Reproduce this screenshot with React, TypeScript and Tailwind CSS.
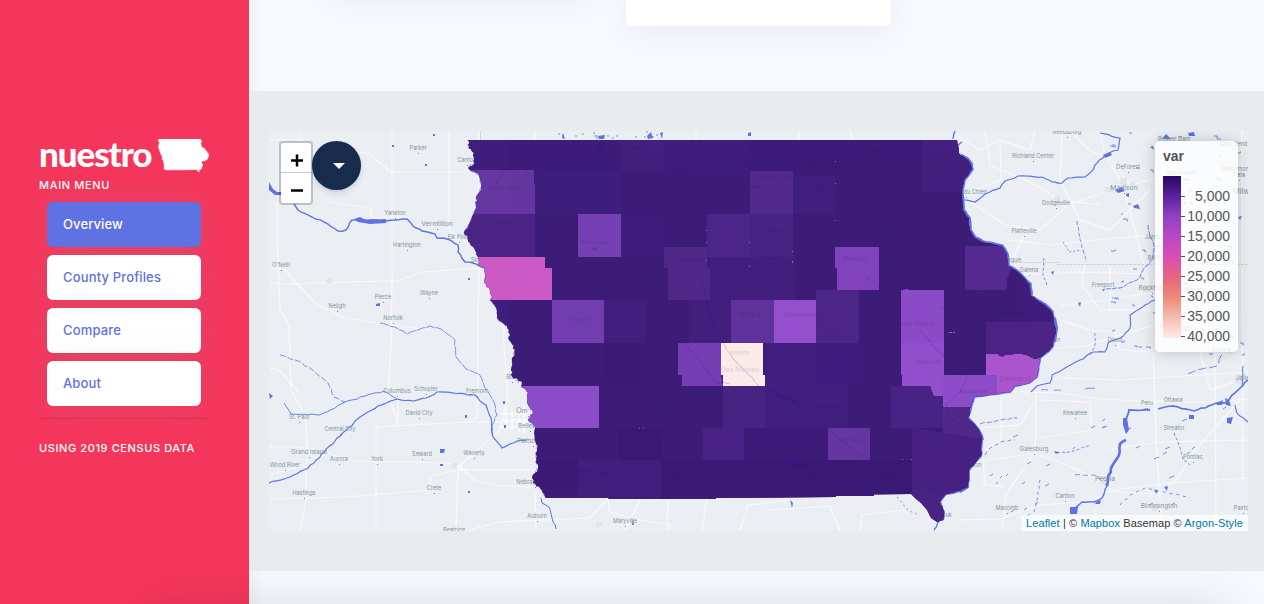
import React from 'react';

type Pt = [number, number];

const rand = (seed: number) => {
  let s = seed;
  return () => {
    s = (s * 16807) % 2147483647;
    return s / 2147483647;
  };
};

/* Subdivides a polyline and nudges the new points so that it reads as a natural bank. */
const rough = (pts: Pt[], amp: number, step: number, seed = 7): string => {
  const r = rand(seed);
  const out: string[] = [];
  for (let i = 0; i < pts.length - 1; i++) {
    const [x1, y1] = pts[i];
    const [x2, y2] = pts[i + 1];
    const n = Math.max(1, Math.round(Math.hypot(x2 - x1, y2 - y1) / step));
    for (let k = 0; k < n; k++) {
      const t = k / n;
      const j = k === 0 ? 0 : amp;
      out.push(`${(x1 + (x2 - x1) * t + (r() - 0.5) * 2 * j).toFixed(1)},${(y1 + (y2 - y1) * t + (r() - 0.5) * 2 * j).toFixed(1)}`);
    }
  }
  const last = pts[pts.length - 1];
  out.push(`${last[0]},${last[1]}`);
  return out.join(' ');
};

const parse = (s: string): Pt[] => s.split(' ').map((p) => p.split(',').map(Number) as Pt);

const west = parse('546,498 542,490 533,483 533,475 538,468 536,458 537,449 535,440 534,425 528,420 533,410 527,403 528,392 520,386 519,382 512,376 512,362 515,350 509,340 509,330 505,325 497,318 496,308 490,300 492,297 490,290 484,282 486,267 479,266 478,257 475,250 470,243 464,233 470,222 472,217 475,210 476,197 481,187 479,175 471,171 468,168 474,164 474,153 469,149 468,140');
const east = parse('957,140 960,155 968,160 972,169 964,180 962,190 963,210 969,218 970,230 975,238 983,242 1002,246 1007,254 1008,266 1018,272 1030,284 1031,296 1045,305 1052,312 1054,322 1056,330 1053,346 1049,351 1040,358 1037,377 1029,383 1015,386 1010,392 997,394 974,397 972,404 968,418 975,425 979,430 982,438 981,456 969,470 968,487 960,491 946,494 940,502 944,512 943,520');
const south = '937,522 931,518 927,510 921,503 916,499 911,494 874,494.5 874,496 836,496 836,497 790,497.5 716,498 716,499 609,499 608,498';
const outline = `${rough(west, 1.3, 2.5)} ${rough(east, 0.6, 3, 31)} ${south}`;

const counties: [string, string][] = [
  ['462,140 621,140 621,170 462,170', '#3f1e7b'],
  ['621,140 664,140 664,171 621,171', '#44217f'],
  ['664,140 750,140 750,171 664,171', '#3f1e7c'],
  ['750,140 922,140 922,171 750,171', '#3d1c79'],
  ['922,140 980,140 980,192 922,192', '#44217f'],
  ['462,170 534,170 534,184 535,184 535,214 462,214', '#6737a1'],
  ['535,171 621,171 621,214 535,214', '#401f7e'],
  ['793,176 835,176 835,214 793,214', '#41207f'],
  ['750,171 793,171 793,214 750,214', '#542c8d'],
  ['460,214 535,214 535,257 460,257', '#4b2585'],
  ['578,214 621,214 621,257 578,257', '#7641b3'],
  ['621,214 664,214 664,257 621,257', '#401e7c'],
  ['707,214 750,214 750,257 707,257', '#4d2788'],
  ['750,214 793,214 793,257 750,257', '#492484'],
  ['470,257 545,257 545,268 552,268 552,300 470,300', '#cb5ac5'],
  ['664,247 707,247 707,268 710,268 710,300 668,300 668,268 664,268', '#502989'],
  ['710,257 795,257 795,300 710,300', '#43207f'],
  ['835,247 879,247 879,290 837,290 837,268 835,268', '#8045bc'],
  ['965,246 1003,246 1012,268 1007,279 1007,290 965,290', '#552c91'],
  ['552,300 605,300 605,327 604,327 604,343 552,343', '#7340b0'],
  ['604,300 646,300 646,343 604,343', '#42207e'],
  ['689,300 731,300 731,343 689,343', '#43207f'],
  ['731,300 774,300 774,343 731,343', '#62349b'],
  ['774,300 816,300 816,343 774,343', '#9650cc'],
  ['816,290 859,290 859,343 816,343', '#4e2888'],
  ['901,290 908,289 908,290 944,290 944,343 901,343', '#8c4bc7'],
  ['986,322 1060,322 1060,365 986,355', '#4b2485'],
  ['604,343 640,343 640,386 610,386 604,375', '#3d1b77'],
  ['678,343 721,343 721,375 723,387 682,387 682,375 678,375', '#7540b2'],
  ['721,343 763,343 763,375 765,375 765,389 762,387 760,388 758,386 723,386 723,375 721,375', '#fbeae8'],
  ['765,343 816,343 816,386 765,386', '#42207f'],
  ['816,343 859,343 859,386 816,386', '#401e7e'],
  ['901,343 944,343 944,375 943,396 934,396 930,386 902,386 902,375 901,375', '#944fcb'],
  ['943,375 997,375 997,394 990,407 943,407', '#8d4bc7'],
  ['986,354 997,354 1002,357 1006,355 1020,354 1026,355 1034,359 1042,358 1042,400 997,400 997,375 986,375', '#ab55ce'],
  ['515,386 599,386 599,428 520,428', '#8c4ec8'],
  ['640,386 723,386 723,428 640,428', '#3e1d79'],
  ['723,386 765,386 765,428 723,428', '#492483'],
  ['765,386 848,386 848,428 765,428', '#41207e'],
  ['891,386 930,386 934,396 943,396 943,428 891,428', '#4a2486'],
  ['943,407 975,407 985,439 943,439', '#502989'],
  ['703,428 744,428 744,460 703,460', '#4a2485'],
  ['619,428 661,428 661,460 619,460', '#3b1a75'],
  ['744,428 828,428 828,460 744,460', '#3e1b78'],
  ['828,428 870,428 870,460 828,460', '#6737a2'],
  ['912,428 985,439 985,524 912,524', '#492384'],
  ['530,460 578,460 578,499 530,499', '#3d1b77'],
  ['578,460 661,460 661,499 578,499', '#41207d'],
  ['661,460 912,460 912,499 661,499', '#3c1a77'],
];

const roads = [
  '269,283 290,284 340,282 395,281 423,272 479,268', '269,267 285,270 298,285 315,303 345,318 390,325 430,330', '277,203 277,238 280,310 289,325 291,390 305,416 308,450 306,470 306,500 300,531',
  '299,131 303,153 368,153 391,172 465,172', '392,131 392,280 391,345 388,395 397,420 397,425', '449,131 449,228 460,245', '479,131 479,270 478,320 478,375 477,418 470,420', '329,202 371,208 372,218 410,217',
  '269,499 345,497 430,490 430,476 460,470 540,470', '269,447 300,447 320,450 350,461 450,463 460,467', '376,531 376,427 465,422 540,422', '456,531 458,467 500,430 508,395 504,345 503,250', '460,467 475,481 500,486 540,487', '535,490 536,531', '465,531 500,522 590,518 608,499', '608,499 610,512 635,519 670,525 670,531', '667,531 668,499', '707,499 702,531', '740,531 748,505 790,500', '640,499 625,531', '269,475 305,465', '398,395 398,426', '299,393 279,370 269,368',
  '956,135 980,150 1000,140 1030,150 1035,131', '985,131 990,165 1030,182 1060,200 1100,205', '1062,131 1060,180 1080,220 1110,230 1150,190', '1000,141 1001,180 960,195 1005,225 1040,230 1068,205 1120,187', '1025,235 1012,260 1008,280', '1100,131 1105,155 1123,185 1135,230 1145,270 1152,300', '1070,131 1089,150 1112,160 1130,185 1170,175', '1008,240 1050,245 1095,240 1155,235', '1020,275 1080,272 1145,274', '1085,264 1082,285 1100,310 1150,310', '1060,306 1105,300 1150,293', '1060,320 1090,330 1115,332 1120,350 1150,352', '1110,264 1110,310', '1055,348 1085,346 1120,335 1155,325',
  '1036,393 1036,440 1034,454 1060,462 1100,480 1112,490', '1020,392 1060,393 1100,399 1140,401 1200,402 1248,399', '986,460 1034,454', '1001,398 1001,440 985,450', '1038,400 1090,402 1092,430 1038,438', '1034,454 1006,494 1002,531', '1153,352 1155,400 1156,440 1160,500 1162,531', '1103,491 1160,494 1180,475 1195,450 1240,400', '1104,450 1160,442 1248,440', '1112,490 1170,483 1248,478', '1036,400 1020,425 980,428', '1100,495 1090,531', '1200,352 1210,390 1240,380', '1060,378 1120,380 1248,372', '1242,131 1243,480', '1215,352 1216,531', '960,520 1000,519 1040,505 1100,500', '860,531 862,515 905,510', '770,510 830,506 840,531', '984,460 984,485 1005,487', '269,140 300,139', '535,131 535,140', '696,131 696,140', '799,131 799,140', '850,131 853,140',
];

const rivers: [string, number, string?][] = [
  ['294,204 298,210 312,217 328,224 338,231 346,230 352,220 360,220 386,221 395,220 407,219 413,226 422,231 435,234 437,238 447,239 458,245 458,252 465,262 473,263 479,266 487,268 485,280', 1.4],
  ['380,323 395,327 407,334 420,329 430,326 441,329 455,340 456,357 466,369 479,374 485,388 494,402 497,415 492,425 493,435', 0.8, '9 1'],
  ['280,355 298,361 315,372 328,383 334,397 345,402', 0.8, '6 2'],
  ['284,403 291,414 320,415 345,402 365,396 384,391 397,399', 0.9],
  ['269,483 290,477 308,468 335,441 360,417 378,406 397,399 414,401 426,398 437,392 475,395 486,405 491,418 493,437 502,448 517,441 527,440', 1.2],
  ['541,498 542,503 549,507 552,518 556,529', 1],
  ['964,200 975,202 985,194 1000,188 1005,181 1018,176 1042,177 1052,182 1062,183 1068,178 1085,177 1093,170 1095,165 1105,155 1118,150 1120,138 1100,133', 1.2],
  ['1077,221 1080,240 1083,250 1086,262', 0.8, '4 2'],
  ['1044,258 1043,275 1047,286', 0.8, '3 2'],
  ['1063,242 1069,252 1080,250', 0.8, '2 2'], ['1148,225 1149,232 1154,245 1153,258 1143,270 1137,280 1120,288 1102,290', 0.9, '5 1'],
  ['1155,300 1145,305 1130,315 1130,328 1120,338 1108,343 1105,352 1093,352 1080,360 1065,368 1052,375 1050,383 1037,386 1031,392', 1.1],
  ['1248,380 1240,388 1232,395 1227,403 1216,403 1194,411 1173,406 1158,409', 1.6],
  ['1150,410 1129,410 1126,420', 1.8], ['1235,405 1237,413 1248,422', 1.1],
  ['1221,356 1217,366 1202,369 1185,374', 0.8, '8 3'], ['1243,366 1242,385', 1],
  ['1126,440 1120,444 1119,455 1111,468 1108,479 1107,486', 2.6],
  ['1107,486 1102,498 1094,502 1082,502 1075,508 1072,514', 1.4],
  ['1174,433 1179,445 1183,460 1190,465', 0.8, '3 2'], ['1120,505 1130,495 1145,488 1165,492 1190,498', 0.8, '3 4'],
  ['969,470 968,487 960,492', 2], ['940,520 934,530', 1.3], ['966,416 975,425 980,432 983,440', 2],
  ['985,455 990,448 1000,442 1015,440', 0.8, '4 3'], ['980,424 1000,420 1017,418', 0.8, '5 2'],
  ['1041,390 1065,390', 0.7, '7 6'], ['1085,389 1095,388', 0.8], ['897,497 908,510 918,515', 0.8, '2 3'], ['1040,480 1037,500 1034,512', 0.8, '3 3'], ['1075,475 1095,475 1100,480', 0.8, '5 3'], ['1057,453 1070,452 1090,445', 0.8, '3 2'], ['962,142 957,147', 1.3],
  ['953,139 955,131', 1.3], ['1028,307 1032,297', 0.8, '2 2'], ['1095,333 1095,345 1090,355', 0.8, '3 2'],
];

const lakes = [
  '269,182 273,189 277,192 282,192 282,195 275,195 269,190', '354,219 360,217 366,220 386,219 386,223 370,224 358,222', '1115,190 1122,187 1125,191 1118,193', '1126,194 1129,193 1129,197 1126,196', '1133,206 1138,204 1140,209 1134,208', '1103,155 1110,152 1112,155 1105,158', '1188,133 1194,132 1195,136 1189,136', '1162,139 1166,134 1171,139', '1189,415 1194,415 1194,419 1189,419', '1227,418 1233,417 1231,424 1227,423', '1123,418 1127,418 1129,430 1126,434 1123,425', '1216,403 1223,400 1222,405 1217,405', '1225,398 1229,400 1231,406 1226,405', '1070,507 1078,507 1077,514 1070,514', '440,449 445,449 444,453 440,453', '440,464 443,464 443,466 440,466', '376,304 380,303 380,306 376,306', '269,393 273,396 270,399', '563,133 565,139 562,138', '598,136 605,135 604,139 599,139', '647,136 651,132 653,138 648,139', '660,133 663,132 662,139', '748,133 751,132 751,136 748,136', '790,500 793,503 792,508', '1150,147 1153,146 1154,150', '633,519 634,525 632,525', '1051,272 1054,271 1053,275', '1078,303 1081,302 1080,307', '1096,502 1101,500 1100,504 1095,504', '1238,217 1242,216 1240,220', '1154,489 1158,491 1156,494', '1164,487 1168,486 1167,491', '1054,451 1059,452 1056,454',
];

const inner = [
  '497,184 502,172 508,165', '599,142 603,140 607,146 603,153 598,158 596,150', '636,172 640,190 650,200 658,210 662,225', '664,158 680,168 690,180 685,190 684,205 690,220 693,232', '823,192 835,205 837,222 845,238', '664,233 675,245 686,262 700,280 705,292 708,310 713,330', '677,334 690,350 705,368 715,382 730,384', '712,320 722,342 734,360 748,374 764,392', '770,388 785,398 800,406 818,418 840,440 865,458 890,475 910,493', '938,270 950,282 970,290 990,305 1005,315 1020,312', '865,277 875,283 878,288', '816,325 830,330 850,338', '920,330 935,348 955,365 967,378 960,392 946,404 948,415 965,430', '680,405 700,412 722,406', '788,462 800,462 805,468',
];

const labels: [number, number, string, number?][] = [
  [418, 150, 'Parker'], [467, 162, 'Canton'], [395, 215, 'Yankton'], [437, 226, 'Vermillion', 6.8], [459, 239, 'Elk Point'], [407, 247, 'Hartington'], [281, 267, "O'Neill"], [337, 308, 'Neligh'], [383, 299, 'Pierce'], [429, 295, 'Wayne'], [393, 320, 'Norfolk'], [485, 262, 'Sioux City', 6],
  [397, 393, 'Columbus', 5.8], [426, 391, 'Schuyler'], [477, 393, 'Fremont'], [512, 379, 'Blair'], [419, 415, 'David City'], [299, 419, 'St. Paul'], [340, 431, 'Central City'], [309, 454, 'Grand Island', 6], [285, 467, 'Wood River'], [339, 461, 'Aurora'], [377, 461, 'York'], [422, 456, 'Seward'], [474, 455, 'Waverly'], [304, 495, 'Hastings'], [434, 490, 'Crete'], [454, 532, 'Beatrice'], [528, 413, 'Omaha', 7], [530, 428, 'Bellevue', 5.8], [533, 443, 'Plattsmouth'], [535, 484, 'Nebraska City'], [537, 518, 'Auburn'], [625, 523, 'Maryville'],
  [1067, 134, 'Reedsburg'], [1033, 158, 'Richland Center'], [966, 194, 'Prairie du Chien'], [1056, 205, 'Dodgeville'], [1024, 233, 'Platteville'], [1008, 262, 'Dubuque', 6.2], [1029, 272, 'Galena'], [1128, 169, 'DeForest'], [1124, 190, 'Madison', 6.8], [1174, 141, 'Beaver Dam'], [1233, 146, 'West Bend'], [1181, 175, 'Watertown'], [1239, 171, 'Menomonee'], [1239, 177, 'Falls'], [1158, 239, 'Janesville'], [1155, 260, 'Beloit'], [1103, 287, 'Freeport'], [1152, 290, 'Rockford', 6.4], [1196, 292, 'Marengo'], [1182, 331, 'DeKalb'], [1051, 342, 'Clinton'], [1115, 342, 'Dixon'], [1221, 352, 'Aurora', 6], [1244, 380, 'Joliet', 6.4], [1147, 405, 'Peru'], [1173, 402, 'Ottawa'], [1075, 415, 'Kewanee'], [1174, 430, 'Streator'], [1034, 451, 'Galesburg', 6], [1193, 459, 'Pontiac'], [1105, 481, 'Peoria', 6.6], [1065, 498, 'Canton'], [1159, 508, 'Bloomington', 6.2], [1243, 510, 'Paxton'], [1007, 510, 'Macomb'], [967, 467, 'Burlington', 6], [942, 517, 'Keokuk'], [1252, 194, 'Milwaukee', 7.6],
];

const innerLabels: [number, number, string, number?][] = [
  [628, 150, 'Estherville'], [535, 177, 'Sheldon'], [506, 190, 'Sioux Center'], [600, 182, 'Spencer'], [507, 225, 'Le Mars'], [562, 231, 'Cherokee'], [643, 233, 'Pocahontas'], [595, 244, 'Storm Lake'], [614, 271, 'Sac City'], [646, 275, 'Rockwell City'], [570, 281, 'Ida Grove'], [625, 315, 'Carroll'], [581, 321, 'Denison'], [737, 167, 'Forest City'], [682, 191, 'Algona'], [776, 180, 'Mason City', 6.2], [812, 164, 'Osage'], [824, 191, 'Charles City'], [776, 232, 'Hampton'], [684, 234, 'Humboldt'], [843, 234, 'Waverly'], [690, 262, 'Fort Dodge', 6], [771, 259, 'Iowa Falls'], [786, 279, 'Eldora'], [855, 261, 'Waterloo', 6], [803, 317, 'Marshalltown', 6], [716, 316, 'Boone'], [671, 321, 'Jefferson'], [875, 152, 'Cresco'], [905, 162, 'Decorah'], [934, 166, 'Waukon'], [940, 218, 'Elkader'], [894, 240, 'Oelwein'], [896, 265, 'Independence'], [951, 310, 'Anamosa'], [915, 326, 'Cedar Rapids', 6.4], [1009, 315, 'Maquoketa'], [929, 364, 'Iowa City', 6.2], [973, 393, 'Muscatine'], [1015, 381, 'Davenport', 6.4], [820, 354, 'Grinnell'], [827, 409, 'Oskaloosa'], [849, 442, 'Ottumwa'], [889, 443, 'Fairfield'], [926, 449, 'Mount Pleasant'], [806, 476, 'Centerville'], [848, 474, 'Bloomfield'], [889, 477, 'Keosauqua'], [947, 489, 'Fort Madison'], [583, 365, 'Harlan'], [619, 357, 'Audubon'], [611, 396, 'Atlantic'], [662, 408, 'Greenfield'], [592, 443, 'Red Oak'], [579, 473, 'Shenandoah'], [609, 476, 'Clarinda'], [672, 437, 'Creston'], [682, 479, 'Mount Ayr'], [727, 476, 'Leon'], [766, 474, 'Corydon'],
];

const specks = (() => {
  const r = rand(411);
  const list: string[] = [];
  for (let i = 0; i < 70; i++) {
    const x = 1110 + r() * 136;
    const y = 132 + r() * 225;
    list.push(`M${x.toFixed(0)} ${y.toFixed(0)}h${(1 + r() * 3).toFixed(0)}v${(r() * 3 - 1).toFixed(0)}h1`);
  }
  for (let i = 0; i < 30; i++) {
    const x = 985 + r() * 255;
    const y = 400 + r() * 120;
    list.push(`M${x.toFixed(0)} ${y.toFixed(0)}l${(2 + r() * 3).toFixed(0)} -2`);
  }
  for (let i = 0; i < 16; i++) {
    list.push(`M${(555 + r() * 110).toFixed(0)} ${(132 + r() * 6).toFixed(0)}h2`);
  }
  return list.join('');
})();

function BaseMap() {
  return (
    <svg viewBox="269 131 979 400" width="979" height="400" className="block font-['Inter',sans-serif]">
      <defs>
        <clipPath id="state"><polygon points={outline} /></clipPath>
      </defs>
      <rect x="269" y="131" width="979" height="400" fill="#ebeff4" />
      <g fill="none" stroke="#f9f9fa" strokeWidth="1.2" strokeLinejoin="round">
        {roads.map((p) => <polyline key={p} points={p} />)}
        <path stroke="#fff" d="M500 414h28M502 420h26M498 427h30M506 408v22M512 410v20M519 410v22M524 405v28" />
        <path stroke="#fff" strokeWidth="0.8" d="M457 465l6 4M458 469h7M461 462v10" />
      </g>
      <path d="M1057 264.500H1248" stroke="#ced4d8" strokeDasharray="3 1" fill="none" />
      <path d="M1003 262.500H1060" stroke="#ced4d8" strokeDasharray="3 1" fill="none" />
      <path d="M480.500 131v10" stroke="#ced4d8" />
      <path fill="#e1e5e8" d="M1105 187h8v5h-8zM1120 178h7v7h-7zM1130 182h5v4h-5zM1055 196h5v7h-5zM1165 176h5v6h-5zM1143 285h8v7h-8zM1227 345h9v9h-9zM1100 476h8v8h-8zM1235 375h9v8h-9zM1152 506h7v5h-7zM452 463h5v5h-5zM596 522h6v5h-6zM327 278h5v5h-5zM1210 200h10v10h-10zM1220 160h12v9h-12zM1222 270h10v12h-10z" />
      <g fill="none" stroke="#5e72e4">
        {rivers.map(([p, w, d]) => (
          <polyline key={p} points={rough(parse(p), 0.8, 4)} strokeWidth={w} strokeDasharray={d} />
        ))}
        <polyline points={rough(east.slice(1, 20), 0.4, 4)} strokeWidth="3.500" />
        <polyline points={rough(east.slice(20), 0.4, 4)} strokeWidth="2" />
        <polyline points={rough(west, 1.2, 4, 90)} strokeWidth="1" strokeDasharray="5 3" opacity="0.6" />
        <polyline points="961,156 967,159 971,164 971,170" strokeWidth="4" />
        <polyline points="1054,318 1056,328 1054,342" strokeWidth="4" />
        <path d={specks} strokeWidth="1" opacity="0.8" />
      </g>
      <g fill="#5e72e4">
        {lakes.map((p) => <polygon key={p} points={p} />)}
        <path d="M392 145h2v2h-2zM433 134h2v2h-2zM425 164h2v2h-2zM468 278h2v2h-2zM465 415h2v3h-2zM468 491h2v2h-2zM503 401h2v3h-2zM504 425h2v3h-2z" />
      </g>
      <g fill="#7f9496" textAnchor="middle">
        {labels.map(([x, y, t, s]) => (
          <text key={t + x} x={x} y={y} fontSize={s ?? 5.6}>{t}</text>
        ))}
      </g>
      <g fill="#76878a">
        {labels.map(([x, y, t]) => <rect key={t + x} x={x} y={y + 3} width="1" height="1" />)}
      </g>
      <g clipPath="url(#state)">
        <rect x="460" y="139" width="600" height="386" fill="#3f1d7a" />
        <g shapeRendering="crispEdges">
          {counties.map(([p, c]) => <polygon key={p} points={p} fill={c} />)}
        </g>
        <g fill="none" stroke="#2c0b95" strokeWidth="0.900" opacity="0.24">
          {inner.map((p) => <polyline key={p} points={rough(parse(p), 0.8, 3)} />)}
          <polyline points="772,390 782,397 796,402" strokeWidth="3" />
          <polyline points="785,462 796,464 804,466" strokeWidth="3" />
          <polyline points="750,187 760,187" strokeWidth="3" />
          <polyline points="593,248 597,250" strokeWidth="3" />
          <polyline points="601,143 600,154" strokeWidth="4" />
        </g>
        <g fill="#27115a" opacity="0.2" textAnchor="middle">
          {innerLabels.map(([x, y, t, s]) => (
            <text key={t + x} x={x} y={y} fontSize={s ?? 5.4}>{t}</text>
          ))}
          <text x="750" y="317.500" fontSize="7.500" letterSpacing="1">IOWA</text>
        </g>
        <g fill="#e3cfd8" textAnchor="middle">
          <text x="740" y="355" fontSize="5.600">Ankeny</text>
          <text x="740" y="372" fontSize="7">Des Moines</text>
        </g>
        <path fill="#b9a8d2" opacity="0.6" d="M706 230h1v1h-1zM706 242h1v1h-1zM706 260h1v1h-1zM749 242h1v1h-1zM749 266h1v1h-1zM792 251h1v1h-1zM792 261h1v2h-1zM835 161h1v1h-1zM835 183h1v1h-1zM835 220h1v1h-1zM639 428h1v1h-1zM643 428h1v1h-1zM902 459h1v1h-1zM911 459h1v1h-1zM949 332h3v1h-3zM953 332h2v1h-2z" />
      </g>
      <path d="M519 381l3 1-1 5-3-1zM527 409l4 1 2 3-5 3z" fill="#ebeff4" />
    </svg>
  );
}

function Legend() {
  const values = ['5,000', '10,000', '15,000', '20,000', '25,000', '30,000', '35,000', '40,000'];
  return (
    <div className="absolute right-[10px] top-[10px] h-[211px] w-[83px] rounded-[5px] bg-white/80 px-2 pt-[6px] font-['Liberation_Sans',Arial,sans-serif] text-[14px] text-[#555] shadow-[0_0_15px_rgba(0,0,0,0.2)]">
      <div className="h-[29px] font-bold leading-[18px]">var</div>
      <div className="flex">
        <div className="h-[162px] w-[18px] bg-[linear-gradient(to_bottom,#280661_0%,#5a22a0_12.500%,#9440c4_25%,#b848c6_37.500%,#dc4cb4_50%,#e8657c_62.500%,#ee8a78_75%,#f6bdb0_87.500%,#fdebe8_100%)]" />
        <div className="flex flex-1 flex-col pt-[10px]">
          {values.map((v) => (
            <div key={v} className="flex h-5 items-center justify-between leading-5">
              <span className="h-px w-1 bg-[#555]" />
              <span>{v}</span>
            </div>
          ))}
        </div>
      </div>
    </div>
  );
}

function MapPanel() {
  return (
    <div className="relative h-[400px] w-[979px] overflow-hidden">
      <BaseMap />
      <div className="absolute left-[10px] top-[10px] flex items-start">
        <div className="w-[34px] rounded-[4px] border-2 border-black/20 bg-white bg-clip-padding text-black">
          <button className="flex h-[30px] w-full items-center justify-center border-b border-[#ccc] pl-px">
            <svg width="14" height="14" viewBox="0 0 14 14" className="mt-[7px]"><path d="M7 0.500v12M1 6.500h12" stroke="#000" strokeWidth="2.500" /></svg>
          </button>
          <button className="flex h-[30px] w-full items-center justify-center pl-px">
            <svg width="14" height="14" viewBox="0 0 14 14" className="mt-[5px]"><path d="M1 6.500h12" stroke="#000" strokeWidth="2.500" /></svg>
          </button>
        </div>
        <button className="-ml-px flex h-[49px] w-[49px] items-center justify-center rounded-full bg-[#172b4d] pl-[5px] shadow-[0_4px_6px_rgba(50,50,93,0.11),0_1px_3px_rgba(0,0,0,0.08)]">
          <svg width="12" height="6" viewBox="0 0 12 6"><path d="M0 0h12L6 6z" fill="#fff" /></svg>
        </button>
      </div>
      <Legend />
      <div className="absolute bottom-0 right-0 h-4 w-[227px] whitespace-nowrap bg-white/70 pl-[5px] font-['Liberation_Sans',Arial,sans-serif] text-[11px] leading-4 tracking-[0.100px] text-[#333]">
        <a className="text-[#0078a8]">Leaflet</a> | © <a className="text-[#0078a8]">Mapbox</a> Basemap © <a className="text-[#0078a8]">Argon-Style</a>
      </div>
    </div>
  );
}

const menu = ['Overview', 'County Profiles', 'Compare', 'About'];

function Sidebar() {
  return (
    <aside className="h-full w-[249px] shrink-0 bg-[#f5365c] pl-[39px] pt-[138px] font-['Inter',sans-serif]">
      <div className="flex h-[36px] items-start">
        <div className="-mt-[2px] w-[119px] whitespace-nowrap font-['Lato',sans-serif] text-[35px] font-black leading-[34px] tracking-[-1.100px] text-white">nuestro</div>
        <svg width="51" height="33" viewBox="464 140 593 384" className="mt-px">
          <polygon points={outline} fill="#fff" stroke="#fff" strokeWidth="8" />
        </svg>
      </div>
      <div className="mt-[3px] h-4 text-[11px] font-medium leading-[17px] tracking-[0.650px] text-white">MAIN MENU</div>
      <nav className="ml-2 mt-[9px] flex w-[154px] flex-col gap-2">
        {menu.map((m, i) => (
          <a
            key={m}
            className={
              i === 0
                ? 'flex h-[45px] items-center rounded-[6px] bg-[#5e72e4] pl-4 pt-px text-[13px] font-medium tracking-[0.100px] text-white shadow-[0_0_32px_rgba(136,152,170,0.15)]'
                : 'flex h-[45px] items-center rounded-[6px] bg-white pl-4 pt-px text-[13px] font-medium tracking-[0.150px] text-[#5e72e4] shadow-[0_0_32px_rgba(136,152,170,0.15)]'
            }
          >
            {m}
          </a>
        ))}
      </nav>
      <div className="mt-3 h-px w-[170px] bg-black/10" />
      <div className="mt-[21px] text-[11px] font-medium leading-[17px] tracking-[0.600px] text-white">USING 2019 CENSUS DATA</div>
    </aside>
  );
}

export default function App() {
  return (
    <div className="relative flex h-[604px] w-[1264px] overflow-hidden bg-[#f8f9fe]">
      <Sidebar />
      <main className="flex min-w-0 flex-1 flex-col bg-[linear-gradient(to_right,rgba(0,0,0,0.03),transparent_14px)]">
        <div className="flex h-[91px] items-start overflow-hidden">
          <div className="-mt-[60px] ml-[80px] h-[54px] w-[265px] rounded-[6px] bg-white shadow-[0_6px_28px_rgba(0,0,0,0.05)]" />
          <div className="-mt-[60px] ml-[32px] h-[86px] w-[265px] rounded-[6px] bg-white shadow-[0_6px_28px_rgba(0,0,0,0.05)]" />
        </div>
        <section className="flex h-[480px] shrink-0 bg-[#e8ecee] pl-5 pt-10">
          <MapPanel />
        </section>
        <div className="flex-1" />
      </main>
      <div className="absolute left-[149px] top-[610px] h-[100px] w-[1076px] shadow-[0_0_50px_rgba(0,0,0,0.15)]" />
    </div>
  );
}
